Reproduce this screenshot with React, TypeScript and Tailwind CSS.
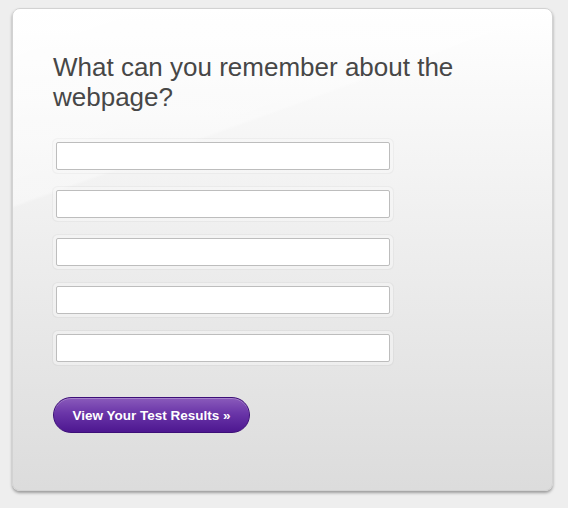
import { Fragment } from 'react'

const fields = [0, 1, 2, 3, 4]

export default function App() {
  return (
    <div className="min-h-[508px] w-full bg-[#eeeeee] pl-[12px] pt-[8px] font-['Liberation_Sans',Arial,sans-serif]">
      <div className="relative h-[483px] w-[541px] overflow-hidden rounded-[8px] border border-[#d2d2d2] bg-[linear-gradient(180deg,#ffffff_0%,#f1f1f1_40%,#dcdcdc_100%)] shadow-[0_2px_3px_rgba(0,0,0,0.35)]">
        {/* gloss highlight */}
        <div className="pointer-events-none absolute inset-0 bg-[linear-gradient(160deg,rgba(255,255,255,0.55)_0%,rgba(255,255,255,0.35)_29%,rgba(255,255,255,0)_29.5%)]" />
        <div className="relative pl-[40px] pt-[43px]">
          <h1 className="w-[440px] text-[26px] leading-[30px] font-normal text-[#474747]">
            What can you remember about the webpage?
          </h1>
          <div className="mt-[30px] flex flex-col gap-[20px] pl-[3px]">
            {fields.map((i) => (
              <Fragment key={i}>
                <input
                  type="text"
                  className="h-[28px] w-[334px] rounded-[2px] border border-[#bdbdbd] bg-white shadow-[0_0_0_3px_rgba(255,255,255,0.5),0_0_0_4px_rgba(0,0,0,0.03)] outline-none"
                />
              </Fragment>
            ))}
          </div>
          <button
            type="button"
            className="mt-[35px] flex h-[36px] w-[197px] items-center justify-center rounded-full border border-[#3d0f78] bg-[linear-gradient(180deg,#8a5bbb_0%,#6a35a8_45%,#4d1790_100%)] pt-[2px] text-[13.5px] font-bold text-white shadow-[inset_0_1px_0_rgba(255,255,255,0.25)]"
          >
            View Your Test Results »
          </button>
        </div>
      </div>
    </div>
  )
}
